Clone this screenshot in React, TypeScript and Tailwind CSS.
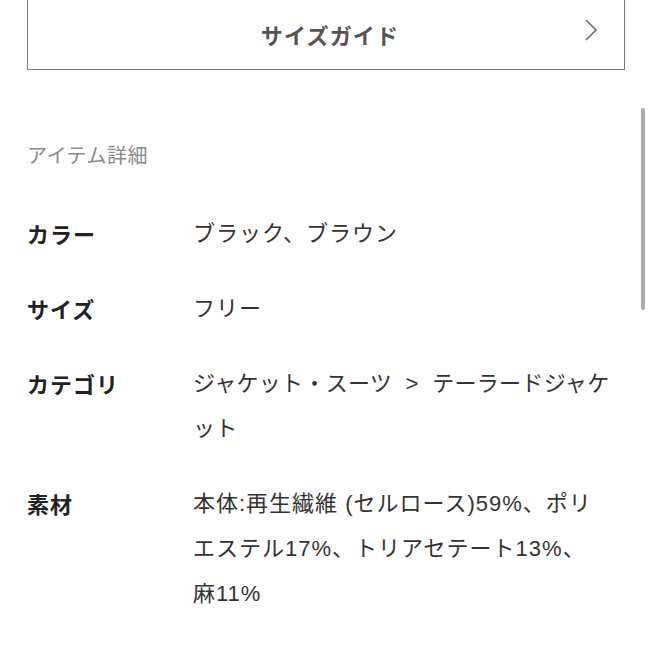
import React from "react";

const font = { fontFamily: '"Liberation Sans", "Noto Sans CJK JP", "Noto Sans", sans-serif' };
const jpFont = { fontFamily: '"Noto Sans CJK JP", "Noto Sans", sans-serif' };

const details: { label: string; value: React.ReactNode }[] = [
  { label: "カラー", value: "ブラック、ブラウン" },
  { label: "サイズ", value: "フリー" },
  {
    label: "カテゴリ",
    value: (
      <span className="tracking-[0.3px] [word-spacing:7px]">ジャケット・スーツ &gt; テーラードジャケット</span>
    ),
  },
  {
    label: "素材",
    value: (
      <>
        本体:再生繊維 (セルロース)59%、ポリ
        <br />
        エステル17%、トリアセテート13%、
        <br />
        麻11%
      </>
    ),
  },
  { label: "原産国", value: "中国" },
];

const ChevronRight = () => (
  <svg width="14" height="24" viewBox="0 0 14 24" fill="none">
    <path d="M2 2l10 10-10 10" stroke="#666" strokeWidth="1.5" />
  </svg>
);

export default function App() {
  return (
    <div className="relative w-[652px] h-[652px] overflow-hidden bg-white" style={font}>
      <div className="px-[27px]">
        <button
          className="relative -mt-[2px] flex h-[72px] w-[598px] items-center justify-center border-[1.5px] border-[#777] bg-white"
          style={jpFont}
        >
          <span className="pl-[8px] text-[22px] font-bold tracking-[1.2px] text-[#555]">サイズガイド</span>
          <span className="absolute right-[26px] top-[19px]">
            <ChevronRight />
          </span>
        </button>

        <h2 className="mt-[62px] text-[20px] leading-[45px] tracking-[0.5px] text-[#8a8a8a]" style={jpFont}>
          アイテム詳細
        </h2>

        <dl className="mt-[34px] flex flex-col gap-[30px]">
          {details.map((d) => (
            <div key={d.label} className="flex">
              <dt
                className="w-[166px] shrink-0 text-[22px] font-bold leading-[45px] tracking-[1px] text-[#222]"
                style={jpFont}
              >
                {d.label}
              </dt>
              <dd className="w-[432px] text-[22px] leading-[45px] tracking-[1px] text-[#333]">{d.value}</dd>
            </div>
          ))}
        </dl>
      </div>

      <div className="absolute left-[641px] top-[108px] h-[202px] w-[4px] rounded-full bg-[#aaa]" />
    </div>
  );
}
